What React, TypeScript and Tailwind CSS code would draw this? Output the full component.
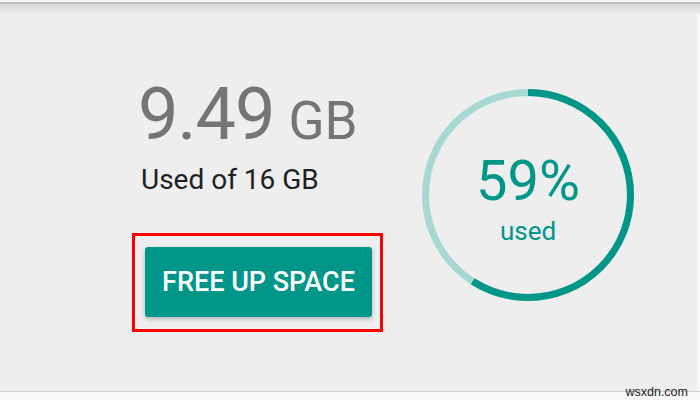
import React from 'react';

const TEAL = '#009688';

function UsageRing({ percent }: { percent: number }) {
  const size = 212;
  const stroke = 7;
  const r = (size - stroke) / 2;
  const c = 2 * Math.PI * r;
  const used = (percent / 100) * c;

  return (
    <div className="relative h-[212px] w-[212px]">
      <svg width={size} height={size} viewBox={`0 0 ${size} ${size}`}>
        <circle cx={size / 2} cy={size / 2} r={r} fill="none" stroke="#a8d8d2" strokeWidth={stroke} />
        <circle
          cx={size / 2}
          cy={size / 2}
          r={r}
          fill="none"
          stroke={TEAL}
          strokeWidth={stroke}
          strokeDasharray={`${used} ${c}`}
          transform={`rotate(-90 ${size / 2} ${size / 2})`}
        />
      </svg>
      <div className="absolute inset-0 flex flex-col items-center pt-[64px] text-[#009688]">
        <span className="text-[56px] leading-none">{percent}%</span>
        <span className="mt-[9px] text-[26px] leading-none">used</span>
      </div>
    </div>
  );
}

export default function App() {
  return (
    <div
      className="relative flex h-[400px] w-[700px] flex-col overflow-hidden bg-[#eeeeee]"
      style={{ fontFamily: 'Roboto, "Liberation Sans", sans-serif' }}
    >
      {/* top edge of the card above */}
      <div className="h-[2px] bg-[#f4f4f4]" />
      <div className="h-[2px] bg-[#bdbdbd]" />
      <div className="h-[10px] bg-gradient-to-b from-[#d6d6d6] to-[#eeeeee]" />

      <div className="flex flex-1 border-r-[3px] border-[#f7f7f7]">
        {/* left column */}
        <div className="flex w-[290px] flex-col pl-[132px] pt-[65px]">
          <div className="ml-[6px] flex items-baseline text-[#757575]">
            <span className="text-[72px] leading-none tracking-[-1px]">9.49</span>
            <span className="ml-[14px] text-[53px] leading-none">GB</span>
          </div>
          <div className="ml-[9px] mt-[15px] whitespace-nowrap text-[28px] leading-none text-[#212121]">
            Used of 16 GB
          </div>

          <div className="mt-[39px] w-[251px] border-[3px] border-[#ff0000] px-[10px] pb-[12px] pt-[11px]">
            <button className="flex h-[70px] w-[227px] items-center justify-center rounded-[3px] bg-[#009688] text-[27px] font-medium text-white shadow-[0_2px_4px_rgba(0,0,0,0.25)]">
              FREE UP SPACE
            </button>
          </div>
        </div>

        {/* ring */}
        <div className="ml-[132px] pt-[75px]">
          <UsageRing percent={59} />
        </div>
      </div>

      {/* bottom edge */}
      <div className="h-[1px] bg-[#cfcfcf]" />
      <div className="h-[8px] bg-[#f8f8f8]" />

      <span
        className="absolute right-[12px] bottom-[2px] text-[12.5px] leading-none text-[#222]"
        style={{ fontFamily: '"Liberation Sans", Arial, sans-serif' }}
      >
        wsxdn.com
      </span>
    </div>
  );
}
